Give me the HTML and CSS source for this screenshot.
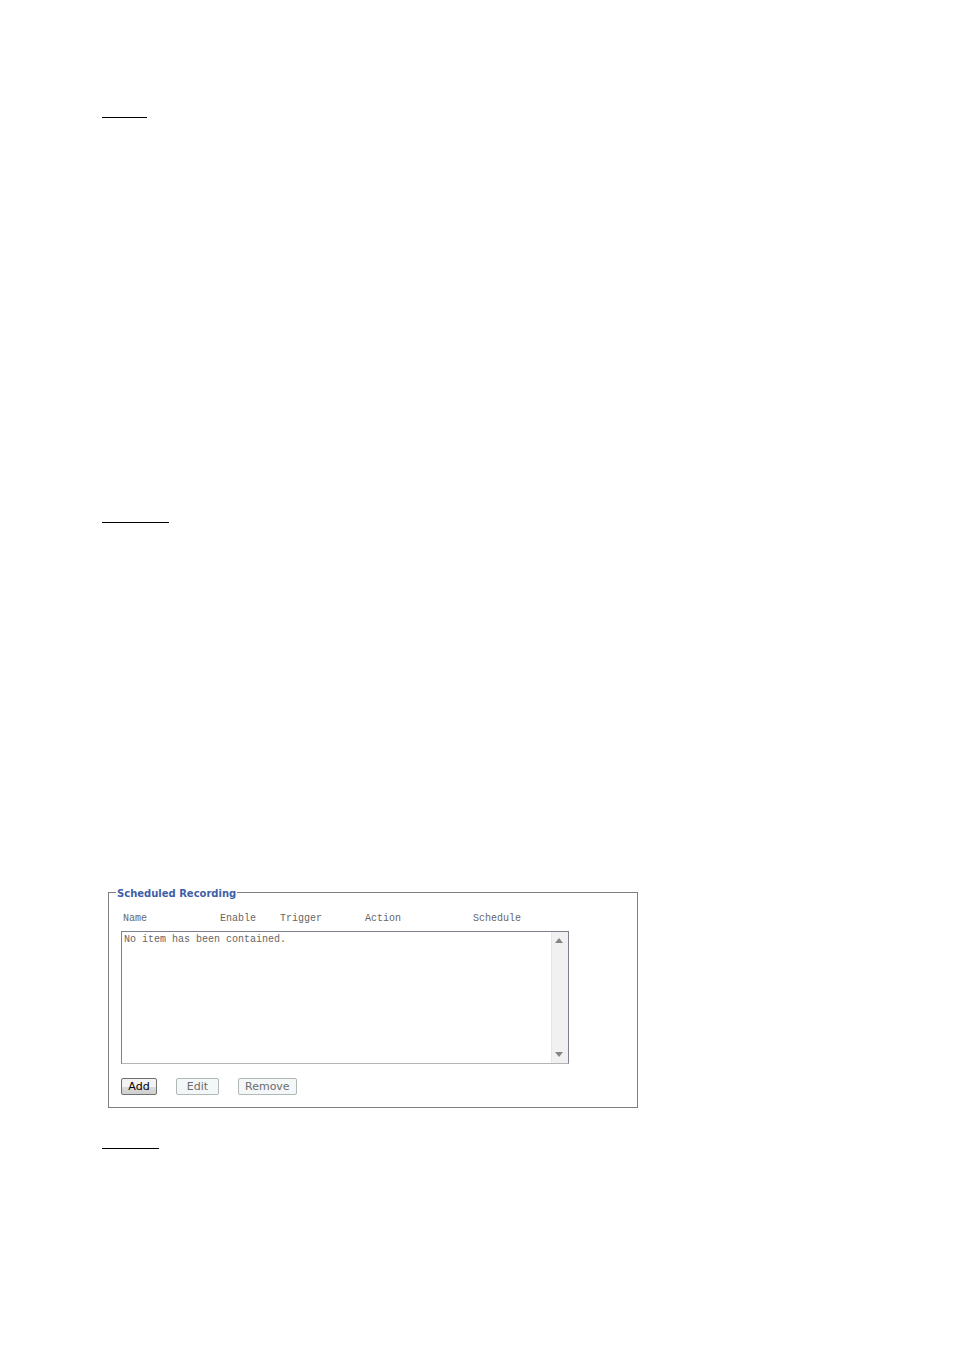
FILE: index.html
```html
<!DOCTYPE html>
<html lang="en">
<head>
	<meta charset="utf-8">
	<title>Scheduled Recording</title>
	<link rel="stylesheet" href="styles.css">
</head>
<body>
	<div class="section section_first">
		<hr class="rule rule_short">
	</div>
	<div class="section section_second">
		<hr class="rule rule_long">
	</div>
	<form class="schedule_form">
		<fieldset class="panel">
			<legend>Scheduled Recording</legend>
			<label class="list_head" for="scheduleList">
				<span>Name</span>
				<span>Enable</span>
				<span>Trigger</span>
				<span>Action</span>
				<span>Schedule</span>
			</label>
			<div class="list_box">
				<select class="list" id="scheduleList" name="scheduleList" size="8">
					<option>No item has been contained.</option>
				</select>
				<div class="scroll">
					<svg width="8" height="5" viewBox="0 0 8 5"><path class="arrow" d="M4 0L8 5H0Z"/></svg>
					<svg width="8" height="5" viewBox="0 0 8 5"><path class="arrow" d="M0 0H8L4 5Z"/></svg>
				</div>
			</div>
			<div class="btns">
				<button type="button" class="btn btn_add">Add</button>
				<button type="button" class="btn btn_edit" disabled>Edit</button>
				<button type="button" class="btn" disabled>Remove</button>
			</div>
		</fieldset>
	</form>
	<hr class="rule rule_mid">
</body>
</html>
```
FILE: styles.css
```css
body {
	margin: 0;
	padding: 117px 102px 0;
	background: #fff;
	font-family: "DejaVu Sans", Verdana, sans-serif;
	font-size: 11px;
	color: #666;
}
.section_first {
	height: 405px;
}
.section_second {
	height: 364px;
}
.rule {
	height: 1px;
	margin: 0;
	border: 0;
	background: #000;
}
.rule_short {
	width: 45px;
}
.rule_mid {
	width: 57px;
}
.rule_long {
	width: 67px;
}
.schedule_form {
	max-width: 530px;
	margin: 0 0 40px 6px;
}
.panel {
	min-width: 0;
	margin: 0;
	padding: 13px 12px 12px;
	border: 1px solid #7f7f7f;
}
.panel legend {
	margin-left: -5px;
	padding: 3px 1px 0;
	font-size: 10px;
	font-weight: bold;
	line-height: 10px;
	color: #3f5fa8;
}
.list_head {
	display: grid;
	grid-template-columns: 97px 60px 85px 108px auto;
	padding-left: 2px;
	font: 10px/14px "Liberation Mono", "Courier New", monospace;
}
.list_box {
	display: flex;
	max-width: 446px;
	height: 131px;
	margin-top: 5px;
	border: 1px solid #7c7f8c;
	border-bottom-color: #b4b4b4;
}
.list {
	flex: 1;
	min-width: 0;
	height: 131px;
	padding: 0;
	border: 0;
	outline: 0;
	overflow: hidden;
	background: #fff;
	color: #666;
	font: 10px/14px "Liberation Mono", "Courier New", monospace;
}
.list option {
	min-height: 14px;
	padding: 2px 2px 1px;
}
.scroll {
	display: flex;
	flex-direction: column;
	justify-content: space-between;
	align-items: center;
	width: 17px;
	box-sizing: border-box;
	padding: 6px 2px 6px 0;
	border-left: 1px solid #e6e6e6;
	background: #f1f1f1;
}
.scroll svg {
	display: block;
}
.arrow {
	fill: #858585;
}
.btns {
	display: flex;
	gap: 19px;
	margin-top: 14px;
}
.btn {
	height: 17px;
	padding: 0 6px;
	border: 1px solid #b0b8b8;
	border-radius: 2px;
	background: #f4f7f7;
	color: #6c6c6c;
	font: 11px/15px "DejaVu Sans", Verdana, sans-serif;
}
.btn_add {
	min-width: 36px;
	border-color: #707070;
	background: linear-gradient(#f3f3f3 50%, #dcdcdc 50%, #cfcfcf);
	color: #000;
}
.btn_edit {
	min-width: 43px;
}
```
